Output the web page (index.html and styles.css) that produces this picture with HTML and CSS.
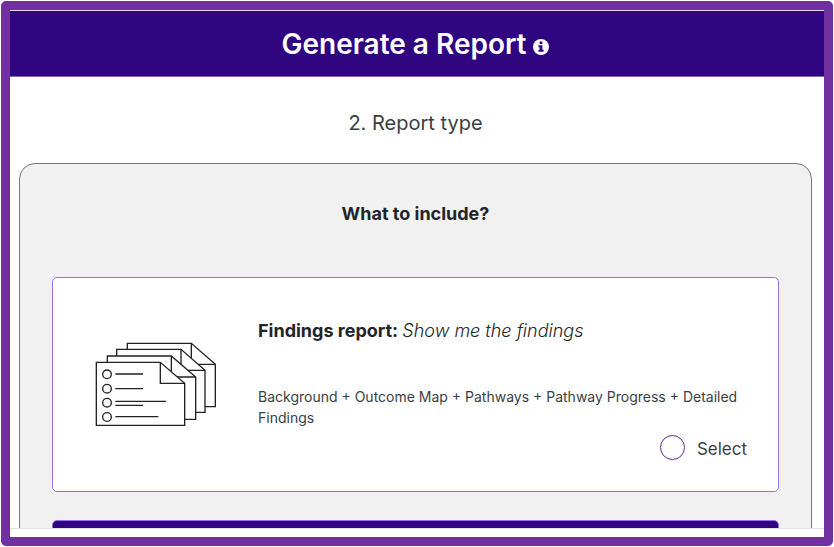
FILE: index.html
```html
<!DOCTYPE html>
<html lang="en">
<head>
    <meta charset="UTF-8">
    <meta name="viewport" content="width=device-width, initial-scale=1.0">
    <title>Generate a Report</title>
    <link rel="stylesheet" href="styles.css">
</head>
<body>
    <div class="frame">
        <header class="header">
            <h1>Generate a Report</h1>
            <svg class="info-icon" viewBox="0 0 16 16" role="img" aria-label="Information">
                <circle cx="8" cy="8" r="8" fill="#fff"/>
                <path d="M6.6 2.4h2.8v2.6H6.6zM5.4 6.2h4v4.6h1.2v2H5.4v-2h1.2V8.2H5.4z" fill="#300580"/>
            </svg>
        </header>

        <main class="content">
            <h2 class="step-title">2. Report type</h2>

            <section class="panel">
                <h3 class="panel-title">What to include?</h3>

                <div class="card">
                    <svg class="card-icon" viewBox="45 36 366 258" aria-hidden="true">
                        <g fill="#fff" stroke="#222" stroke-width="4">
                            <path d="M142 40H334L406 103V230H142Z"/>
                            <path d="M334 40V103H406" fill="none"/>
                            <path d="M110 58H303L375 121V247H110Z"/>
                            <path d="M303 58V121H375" fill="none"/>
                            <path d="M82 78H274L347 141V268H82Z"/>
                            <path d="M274 78V141H347" fill="none"/>
                            <path d="M49 97H241L314 160V286H49Z"/>
                            <path d="M241 97V160H314" fill="none"/>
                            <circle cx="81" cy="133" r="13"/>
                            <circle cx="81" cy="176" r="13"/>
                            <circle cx="81" cy="218" r="13"/>
                            <circle cx="81" cy="261" r="13"/>
                            <path d="M106 132H189M106 176H189M106 214H258M106 226H189M106 260H235" fill="none"/>
                        </g>
                    </svg>
                    <div class="card-body">
                        <h4 class="card-title">Findings report: <em>Show me the findings</em></h4>
                        <p class="card-text">Background + Outcome Map + Pathways + Pathway Progress + Detailed Findings</p>
                        <div class="card-select">
                            <input type="radio" id="findings" name="reportType" value="findings">
                            <label for="findings">Select</label>
                        </div>
                    </div>
                </div>

                <div class="card card-active"></div>
            </section>
        </main>

        <footer class="footer"></footer>
    </div>
</body>
</html>
```

FILE: styles.css
```css
* {
    margin: 0;
    padding: 0;
    box-sizing: border-box;
}

body {
    font-family: Inter, "Liberation Sans", sans-serif;
    background: #fff;
    color: #212529;
    height: 100vh;
    padding: 1px;
}

.frame {
    display: flex;
    flex-direction: column;
    height: 100%;
    border: 9px solid #7030a0;
    border-radius: 5px;
    overflow: hidden;
}

.header {
    display: flex;
    align-items: center;
    justify-content: center;
    gap: 6px;
    padding: 17px 20px 15px 16px;
    background: #300580;
    border-top: 1px solid #ddd;
    border-bottom: 1px solid #8a63b8;
    color: #fff;
}

.header h1 {
    font-size: 28px;
    line-height: 33px;
    font-weight: 600;
}

.info-icon {
    width: 16px;
    height: 16px;
    margin-top: 4px;
}

.content {
    flex: 1;
    min-height: 0;
    overflow: hidden;
    padding: 32px 12px 0 9px;
}

.step-title {
    font-size: 20px;
    line-height: 28px;
    font-weight: 400;
    color: #3a3f44;
    text-align: center;
    margin-bottom: 26px;
}

.panel {
    background: #f1f1f1;
    border: 1px solid #777;
    border-radius: 16px;
    padding: 36px 32px;
}

.panel-title {
    font-size: 18px;
    line-height: 28px;
    font-weight: 700;
    text-align: center;
    margin-bottom: 49px;
}

.card {
    display: flex;
    align-items: center;
    gap: 41px;
    min-height: 215px;
    padding: 28px 31px 28px 42px;
    background: #fff;
    border: 1px solid #9b6cf0;
    border-radius: 5px;
    margin-bottom: 28px;
}

.card-active {
    background: #300580;
}

.card-icon {
    flex: none;
    width: 122px;
    height: 86px;
}

.card-body {
    flex: 1;
    padding-top: 9px;
}

.card-title {
    font-size: 18px;
    line-height: 28px;
    font-weight: 700;
    margin-bottom: 41px;
}

.card-title em {
    font-weight: 300;
}

.card-text {
    font-size: 14px;
    line-height: 21px;
    color: #3a3f44;
    margin-bottom: 6px;
}

.card-select {
    display: flex;
    align-items: center;
    justify-content: flex-end;
    gap: 12px;
    font-size: 17px;
    line-height: 26px;
    color: #3a3f44;
}

.card-select label {
    padding-top: 2px;
}

.card-select input {
    appearance: none;
    width: 25px;
    height: 25px;
    border: 1px solid #5b2d9e;
    border-radius: 50%;
    background: #fff;
}

.card-select input:checked {
    background: #300580;
}

.footer {
    height: 9px;
    border-top: 1px solid #e3e3e3;
    background: #fff;
}
```
